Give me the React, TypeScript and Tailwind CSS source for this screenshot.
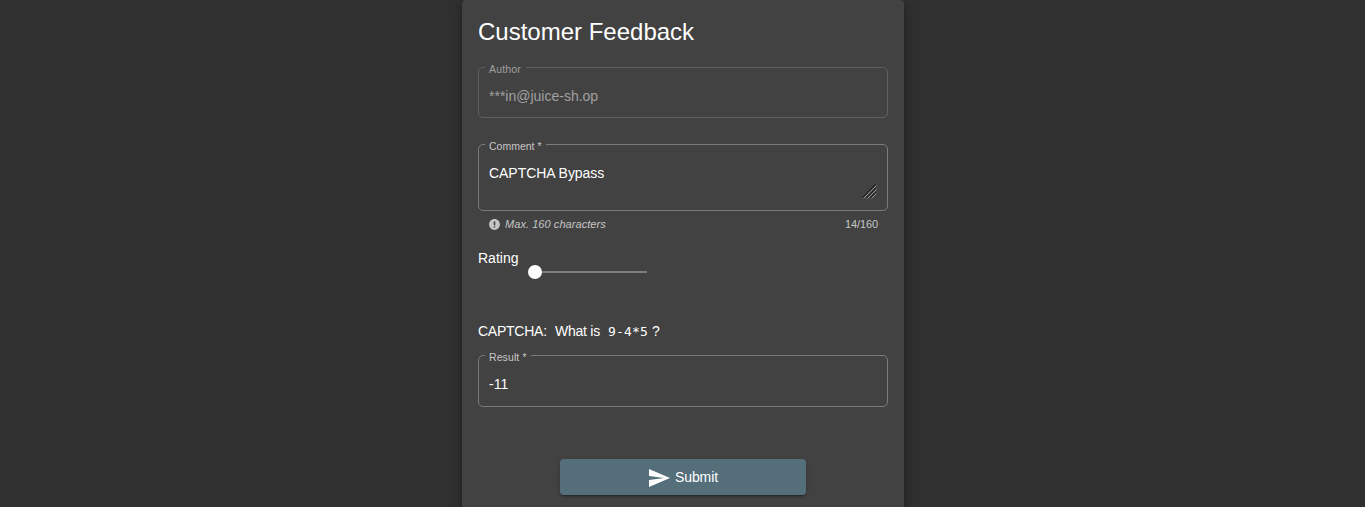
import type { ReactNode } from 'react';

type OutlinedFieldProps = {
  label: string;
  className: string;
  legendClassName: string;
  disabled?: boolean;
  children: ReactNode;
};

function OutlinedField({ label, className, legendClassName, disabled, children }: OutlinedFieldProps) {
  return (
    <fieldset
      className={`m-0 min-w-0 rounded-[5px] border pl-1.5 pr-2.5 ${disabled ? 'border-[#606060] text-[#a0a0a0]' : 'border-[#7b7b7b] text-white'} ${className}`}
    >
      <legend
        className={`flex h-px items-center whitespace-nowrap pl-1 text-[10.5px] leading-none ${disabled ? 'text-[#a0a0a0]' : 'text-[#c6c6c6]'} ${legendClassName}`}
      >
        <span className="pt-[3px]">{label}</span>
      </legend>
      {children}
    </fieldset>
  );
}

function ResizeGrip() {
  return (
    <svg className="h-[15px] w-[15px]" viewBox="0 0 15 15" fill="none">
      <path d="M0.5 13.5L13.5 0.5M4.5 13.5L13.5 4.5M8.5 13.5L13.5 8.5" stroke="#262626" strokeWidth="1.1" />
      <path d="M1.5 14.5L14.5 1.5M5.5 14.5L14.5 5.5M9.5 14.5L14.5 9.5" stroke="#a0a0a0" strokeWidth="0.9" />
    </svg>
  );
}

export default function App() {
  return (
    <div className="flex h-[507px] justify-center overflow-hidden bg-[#303030] pl-px font-['Liberation_Sans',Arial,sans-serif] text-sm text-white">
      <main className="flex h-[560px] w-[442px] shrink-0 flex-col rounded bg-[#424242] px-4 pt-4 shadow-[0_3px_5px_-1px_rgba(0,0,0,0.2),0_6px_10px_0_rgba(0,0,0,0.14),0_1px_18px_0_rgba(0,0,0,0.12)]">
        <h1 className="text-2xl leading-8">Customer Feedback</h1>

        <OutlinedField
          label="Author"
          disabled
          className="mt-[19px] h-[51px]"
          legendClassName="w-[41px] tracking-[0.15px]"
        >
          <p className="pl-1 pt-[20px] leading-4">***in@juice-sh.op</p>
        </OutlinedField>

        <OutlinedField label="Comment *" className="mt-[26px] h-[67px]" legendClassName="w-[61px]">
          <div className="flex justify-between pl-1 pt-[20px]">
            <p className="leading-4 tracking-[-0.05px]">CAPTCHA Bypass</p>
            <div className="pt-[19px]">
              <ResizeGrip />
            </div>
          </div>
        </OutlinedField>

        <div className="mt-[6px] flex h-3.5 items-center justify-between px-[10px] text-[11px] leading-[14px] text-[#c6c6c6]">
          <span className="flex items-center">
            <svg className="mr-1 h-[13px] w-[13px]" viewBox="0 0 24 24" fill="currentColor">
              <path d="M12 2C6.48 2 2 6.48 2 12s4.48 10 10 10 10-4.48 10-10S17.52 2 12 2zm1.5 15.5h-3v-2.5h3v2.5zm0-4h-3V6.5h3v7z" />
            </svg>
            <em className="tracking-[0.06px]">Max. 160 characters</em>
          </span>
          <span className="tracking-[-0.1px]">14/160</span>
        </div>

        <div className="mt-[19px] flex h-[30px]">
          <span className="w-[41px] leading-4">Rating</span>
          <div className="ml-[9px] mt-[15px] flex h-3.5 w-[119px] items-center">
            <span className="h-3.5 w-3.5 shrink-0 rounded-full bg-white" />
            <span className="h-0.5 flex-1 bg-[#7e7e7e]" />
          </div>
        </div>

        <div className="mt-[43px] flex h-4 items-center whitespace-nowrap leading-4">
          <span className="w-[69px] tracking-[-0.25px]">CAPTCHA:</span>
          <span className="ml-2 w-[45px] tracking-[-0.25px]">What is</span>
          <code className="ml-2 w-10 pt-0.5 font-['DejaVu_Sans_Mono',monospace] text-[13px] tracking-[0.17px]">9-4*5</code>
          <span className="ml-1">?</span>
        </div>

        <OutlinedField
          label="Result *"
          className="mt-4 h-[52px]"
          legendClassName="w-[46px] tracking-[0.1px]"
        >
          <p className="pl-1 pt-[20px] leading-4">-11</p>
        </OutlinedField>

        <button
          type="button"
          className="mt-[52px] flex h-9 w-[246px] items-center justify-center self-center rounded bg-[#546e7a] shadow-[0_3px_1px_-2px_rgba(0,0,0,0.2),0_2px_2px_0_rgba(0,0,0,0.14),0_1px_5px_0_rgba(0,0,0,0.12)]"
        >
          <svg className="-ml-px mr-1 mt-0.5 h-6 w-6" viewBox="0 0 24 24" fill="currentColor">
            <path d="M2.01 21L23 12 2.01 3 2 10l15 2-15 2z" />
          </svg>
          <span className="tracking-[-0.1px]">Submit</span>
        </button>
      </main>
    </div>
  );
}
